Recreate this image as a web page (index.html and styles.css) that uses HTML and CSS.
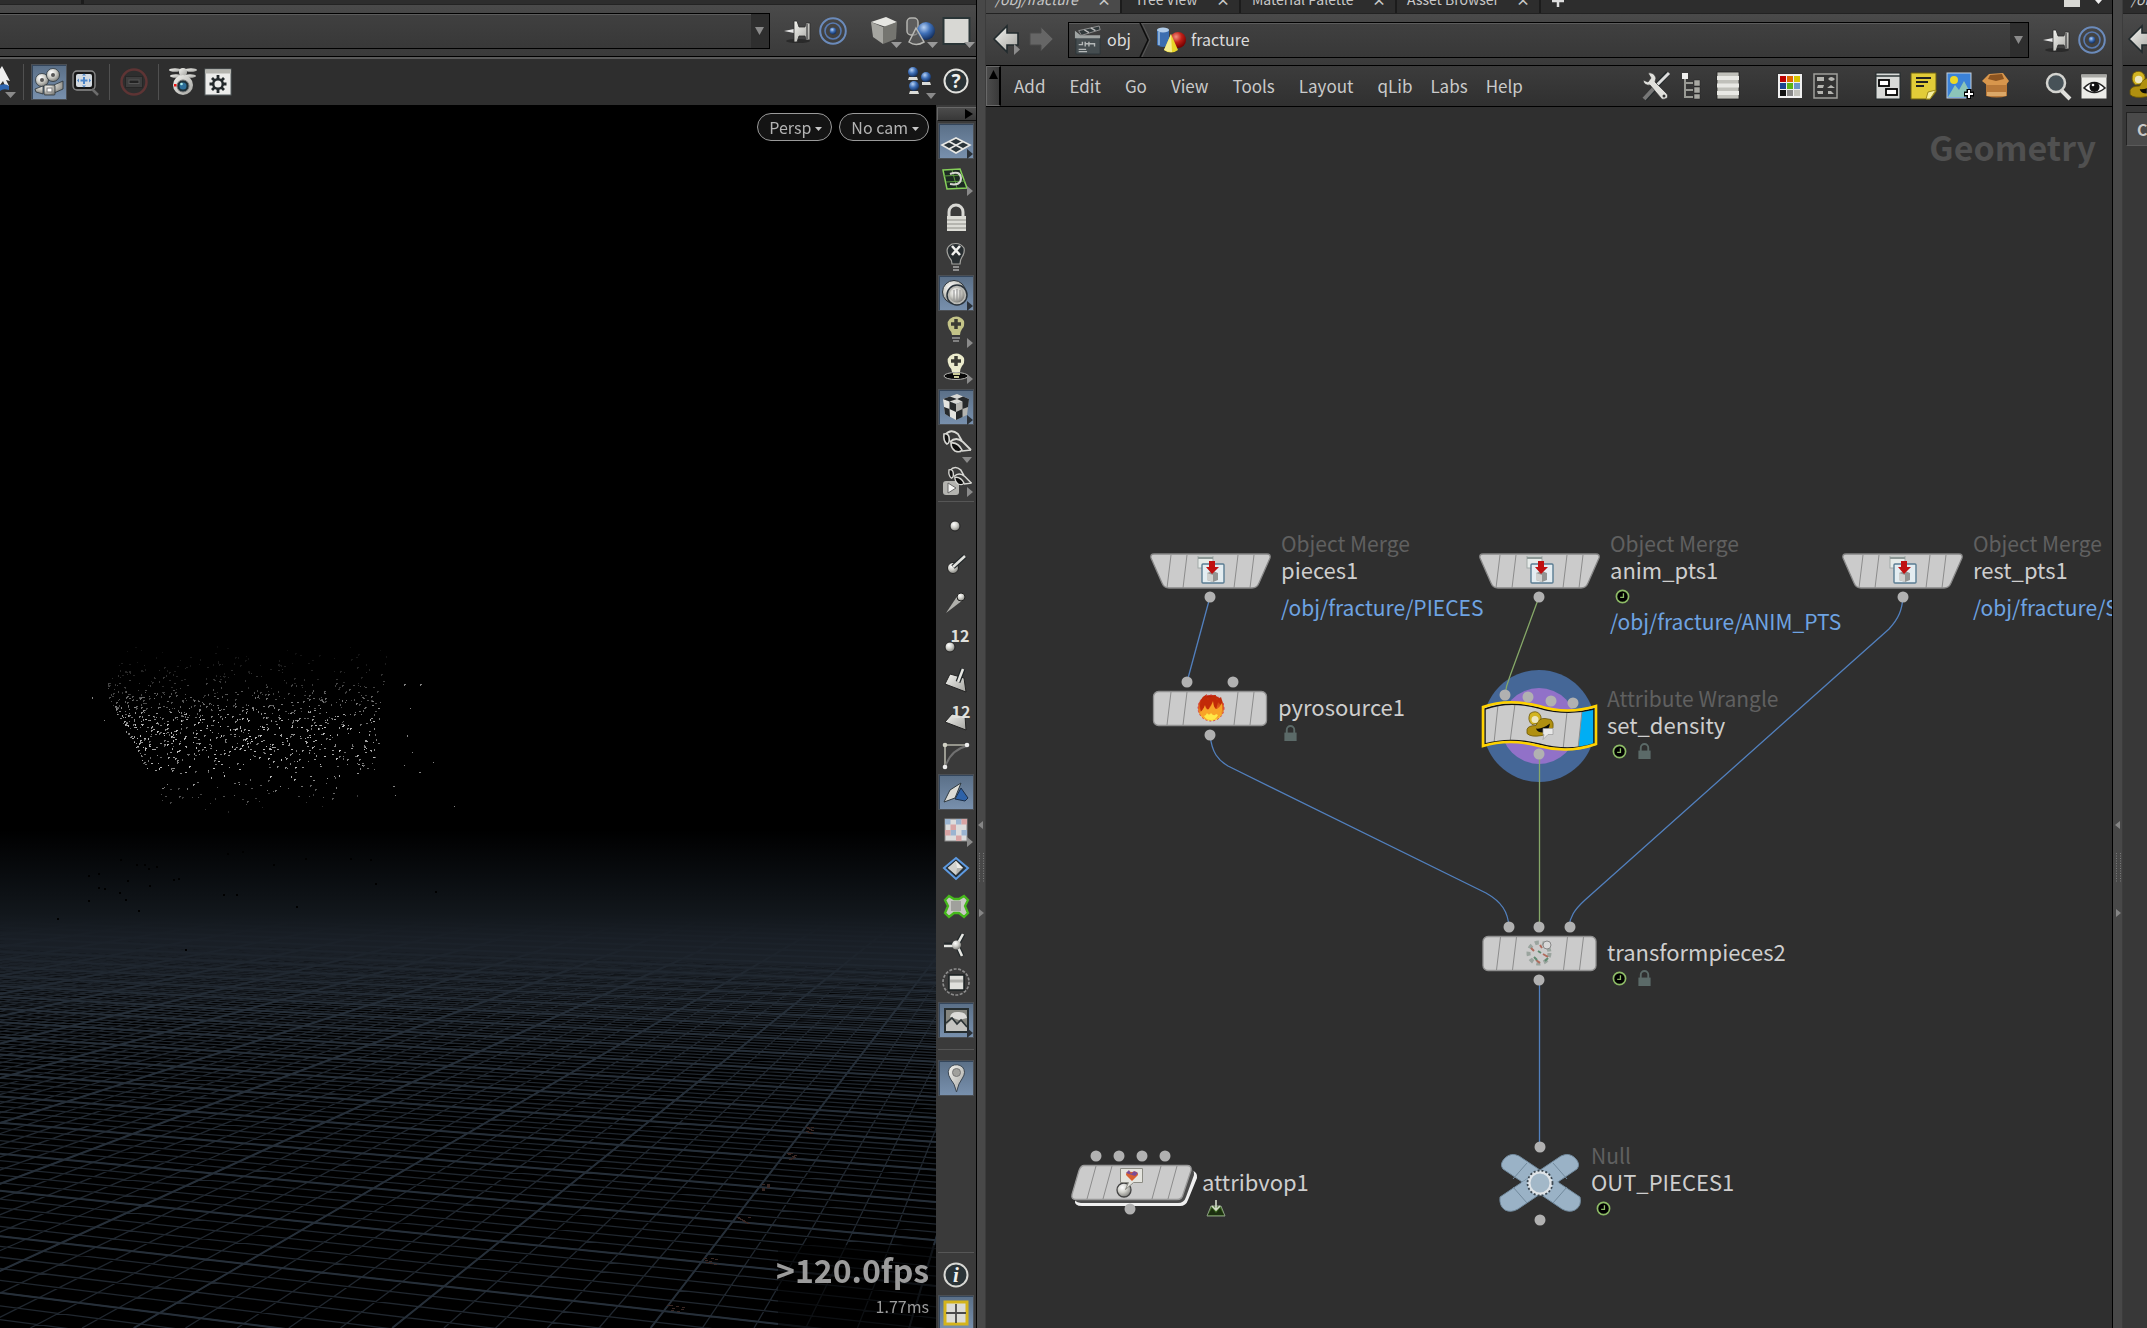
FILE: index.html
```html
<!DOCTYPE html>
<html lang="en">
<head>
<meta charset="utf-8">
<title>Network editor</title>
<link rel="stylesheet" href="styles.css">
</head>
<body>
<svg class="defs" aria-hidden="true">
  <defs>
    <linearGradient id="metal" x1="0" y1="0" x2="1" y2="1"><stop offset="0" stop-color="#f4f4f0"/><stop offset="1" stop-color="#a4a4a0"/></linearGradient>
    <radialGradient id="ball" cx=".38" cy=".32" r=".7"><stop offset="0" stop-color="#fff"/><stop offset=".5" stop-color="#d0d0ca"/><stop offset="1" stop-color="#80807c"/></radialGradient>
    <radialGradient id="blueball" cx=".38" cy=".3" r=".7"><stop offset="0" stop-color="#b8d2f4"/><stop offset=".5" stop-color="#3f70b8"/><stop offset="1" stop-color="#143060"/></radialGradient>
    <radialGradient id="redball" cx=".38" cy=".3" r=".7"><stop offset="0" stop-color="#f09080"/><stop offset=".5" stop-color="#c02018"/><stop offset="1" stop-color="#700"/></radialGradient>
    <linearGradient id="fire" x1="0" y1="0" x2="0" y2="1"><stop offset="0" stop-color="#b81c04"/><stop offset=".5" stop-color="#e0601a"/><stop offset="1" stop-color="#ffe83a"/></linearGradient>
  </defs>
  <symbol id="pin" viewBox="0 0 28 28"><ellipse cx="15" cy="24" rx="12" ry="2" fill="#2a2a2a"/><path d="M1 14 11 12v4z" fill="#e8e8e8"/><path d="M11 4h3l2 6h6l1-4h4v17h-4l-1-4h-6l-2 6h-3z" fill="url(#metal)" stroke="#2c2c2c" stroke-width=".8"/><path d="M24 7v15" stroke="#555" stroke-width="1.5"/></symbol>
  <symbol id="target" viewBox="0 0 28 28"><circle cx="14" cy="14" r="12.8" fill="none" stroke="#6b8bbb" stroke-width="2"/><circle cx="14" cy="14" r="8" fill="none" stroke="#587ab0" stroke-width="1.6"/><circle cx="14" cy="14" r="3.4" fill="url(#blueball)"/></symbol>
  <symbol id="back" viewBox="0 0 30 36"><path d="M3 17 16 4v7h11v12H16v7z" fill="url(#metal)" stroke="#222b2e" stroke-width="1.6"/><path d="M23 22v11l6-5.500z" fill="#8c8c8c"/></symbol>
  <symbol id="clock" viewBox="0 0 16 16"><circle cx="8" cy="8" r="6.500" fill="#000" stroke="#8dbb66" stroke-width="1.800"/><path d="M9 4.500V9H5.500" fill="none" stroke="#8dbb66" stroke-width="1.400"/></symbol>
  <symbol id="lock" viewBox="0 0 16 18"><path d="M4 9V5a4 4 0 0 1 8 0v4" fill="none" stroke="#5b6a68" stroke-width="2"/><rect x="1.500" y="8" width="13" height="9" fill="#5b6a68"/></symbol>
  <symbol id="hat" viewBox="0 0 28 28"><path d="M4 2q6-4 10 1 3 5-2 9l-6 1q-5-4-2-11z" fill="#d2b422" stroke="#6c5606" stroke-width=".8"/><path d="M1 18q1-4 9-4 3-8 9-7l6 1q3 3 2 8-2 6-11 8-11 2-15-2z" fill="#b09010" stroke="#6c5606" stroke-width=".8"/><path d="M10 17q6 1 14-5-1 7-7 9-6 0-7-4z" fill="#0c0c08"/><circle cx="9" cy="8" r="3.500" fill="#ece6c0"/><path d="M17 17h10v6h-5l-5 5 1-5h-1z" fill="#e8e8e8" stroke="#999" stroke-width=".7"/></symbol>
  <symbol id="merge" viewBox="0 0 28 28"><rect x="1" y="0" width="15" height="12" fill="#e6ebe9" stroke="#a2aaa8"/><path d="M1 2h15" stroke="#8d9896" stroke-width="2"/><rect x="5" y="8" width="22" height="19" rx="1" fill="#e4edf1" stroke="#5a7c92" stroke-width="1.400"/><path d="m10 17 6-2 5 2v7l-5 2-6-2z" fill="#939593"/><path d="m10 17 6 2v7l-6-2z" fill="#cfd0ce"/><path d="M12 5h6v6h4l-7 7-6-7h3z" fill="#c01010"/></symbol>
  <symbol id="eyeglass" viewBox="0 0 36 36"><path d="M7 8q6-7 13-1l4 7M12 15q6-6 13 0l8 8" fill="none" stroke="#d8d8d4" stroke-width="1.800"/><path d="M6 7q4-1 5 3 1 6-2 7-4-3-3-10z" fill="#141414" stroke="#d8d8d4" stroke-width="1.600"/><path d="M13 16q7-1 11 7-2 3-7 1-4-3-4-8z" fill="#0c0c0c" stroke="#d8d8d4" stroke-width="1.600"/><path d="m24 24 9-1" stroke="#d8d8d4" stroke-width="1.600"/></symbol>
</svg>

<div class="app">
  <section class="pane scene">
    <div class="stub"><i></i></div>
    <div class="bar pathbar">
      <div class="combo"><input class="path" type="text" aria-label="Path"><button class="drop" aria-label="Recent paths"><svg width="12" height="12"><path d="M1 2h9L5.500 10z" fill="#8a8a8a"/></svg></button></div>
      <button class="ic" aria-label="Pin"><svg><use href="#pin"/></svg></button>
      <button class="ic" aria-label="Link"><svg><use href="#target"/></svg></button>
      <button class="ic wide" aria-label="Shading"><svg viewBox="0 0 28 28"><path d="m1 5 15-5 11 5-11 5z" fill="#e6e6e2"/><path d="m1 5 12 5v17L3 20z" fill="#a5a5a0"/><path d="m13 10 14-5-1 17-13 5z" fill="#757570"/><path d="M21 25h11l-5.500 6z" fill="#999"/></svg></button>
      <button class="ic" aria-label="Objects"><svg viewBox="0 0 28 28"><rect x="1" y="1" width="11" height="17" rx="4" fill="#5e5e5e" stroke="#b4b4b0" stroke-width="1.500"/><circle cx="20" cy="14" r="9" fill="url(#blueball)"/><path d="m10 11 8 14q-8 5-15 0z" fill="#6668" stroke="#b8b8b4" stroke-width="1.500"/><path d="M21 25h11l-5.500 6z" fill="#999"/></svg></button>
      <button class="ic" aria-label="Background"><svg viewBox="0 0 28 28"><rect x="1.500" y="1" width="26" height="26" fill="#d8d8d4" stroke="#2a3537" stroke-width="2"/><path d="M22 25h11l-5.500 6z" fill="#999"/></svg></button>
    </div>
    <div class="bar tools">
      <button class="tool sel" aria-label="Select"><svg width="24" height="36"><circle cx="1" cy="13" r="4" fill="#24435a"/><path d="M2 2 10 17l-4-1 3 6-3 2-3-7-3 4V5z" fill="#eee"/><path d="M0 21q6-2 9 1v4q-6-2-9 1z" fill="#2f66b0"/><path d="M5 28h11l-5.500 6z" fill="#8a8a8a"/></svg></button>
      <i class="vsep"></i>
      <button class="tool on" aria-label="Camera view"><svg width="34" height="36" viewBox="0 0 34 36"><g fill="url(#ball)" stroke="#2b3338" stroke-width=".8"><circle cx="10" cy="16" r="6.500"/><circle cx="21" cy="11" r="6.500"/><path d="m22 21 9-4v8l-9 4zM3 25l8-3v8l-7-2z"/><rect x="12" y="21" width="11" height="10" rx="1"/></g><circle cx="10" cy="16" r="2" fill="#555"/><circle cx="21" cy="11" r="2" fill="#555"/><rect x="15" y="24" width="5" height="4" fill="#fff" stroke="#777"/></svg></button>
      <button class="tool" aria-label="View tool"><svg width="34" height="36" viewBox="0 0 34 36"><rect x="8" y="9" width="18" height="15" rx="3" fill="#d4dae0" stroke="#151515" stroke-width="2"/><rect x="6" y="7" width="22" height="19" rx="4" fill="none" stroke="#8c8c8c" stroke-width="1.300"/><path d="m25 25 6 6" stroke="#6c6c6c" stroke-width="2.500"/><path d="M17 13v7M13.500 16.500h7" stroke="#4a84c8" stroke-width="2"/><path d="m10 16.500 2-2v4zM24 16.500l-2-2v4zM15 11.500h4l-2-2zM15 21.500h4l-2 2z" fill="#4a84c8"/></svg></button>
      <i class="vsep s2"></i>
      <button class="tool stop" aria-label="Stop"><svg width="30" height="30" viewBox="0 0 30 30"><circle cx="15" cy="15" r="12.500" fill="none" stroke="#5e3434" stroke-width="2.500"/><rect x="6.500" y="9.500" width="17" height="11" fill="#3d3d3d" stroke="#262626"/><rect x="10" y="13" width="10" height="3.500" fill="#222" stroke="#555"/></svg></button>
      <i class="vsep s3"></i>
      <button class="tool drone" aria-label="Flycam"><svg width="30" height="30" viewBox="0 0 30 30"><g fill="url(#metal)"><ellipse cx="7" cy="3" rx="6" ry="1.800"/><ellipse cx="23" cy="3" rx="6" ry="1.800"/><ellipse cx="8" cy="9" rx="6" ry="1.800"/><ellipse cx="22" cy="9" rx="6" ry="1.800"/><circle cx="15" cy="5" r="4"/><circle cx="15" cy="18" r="10"/></g><circle cx="15" cy="19" r="6" fill="#1e3038" stroke="#777"/><circle cx="15" cy="19" r="3.500" fill="#2d6f9a"/><circle cx="13.500" cy="17" r="1.300" fill="#aee"/><rect x="6" y="17" width="2.500" height="2.500" fill="#e11"/></svg></button>
      <button class="tool" aria-label="Flipbook"><svg width="28" height="28" viewBox="0 0 28 28"><rect x="1" y="1" width="26" height="26" fill="#ececea" stroke="#555c5e"/><path d="M1 3.500h26" stroke="#b4b4ae" stroke-width="4"/><g stroke="#23292b" stroke-width="2.800"><path d="M14 7v18M5.500 16h17M8 10l12 12M20 10 8 22"/></g><circle cx="14" cy="16" r="4.800" fill="#ececea" stroke="#23292b" stroke-width="2.500"/></svg></button>
      <span class="grow"></span>
      <button class="tool bub" aria-label="Handles"><svg width="30" height="34" viewBox="0 0 30 34"><g fill="url(#blueball)"><circle cx="9" cy="7" r="5"/><circle cx="22" cy="12" r="5"/><circle cx="10" cy="21" r="5"/></g><path d="M5 12h8l1 3H4zM18 17h8l1 3h-9zM6 26h8l1 3H5z" fill="#dcdcd8"/><path d="M22 28h10l-5 6z" fill="#8a8a8a"/></svg></button>
      <button class="tool" aria-label="Help"><svg width="28" height="28" viewBox="0 0 28 28"><circle cx="14" cy="13" r="11.500" fill="#2a3337" stroke="#e2e2de" stroke-width="2"/><text x="14" y="19.500" class="qm">?</text></svg></button>
    </div>
    <div class="work">
      <div class="viewport">
        <canvas id="view" class="view"></canvas>
        <div class="pills"><button class="pill">Persp<svg width="7" height="4"><path d="M0 0h7L3.500 4z" fill="#c8c8c8"/></svg></button><button class="pill">No cam<svg width="7" height="4"><path d="M0 0h7L3.500 4z" fill="#c8c8c8"/></svg></button></div>
        <div class="stats"><strong>&gt;120.0fps</strong><span>1.77ms</span></div>
      </div>
      <div class="strip">
        <button class="head" aria-label="Collapse"><svg width="10" height="10"><path d="M1 0v10l8-5z" fill="#000"/></svg></button>
        <button class="b on" aria-label="Grid"><svg viewBox="0 0 36 36"><path d="m4 22 14-7 14 7-14 8z" fill="#2a3439" stroke="#e8e8e4" stroke-width="1.600"/><path d="m11 18.500 14 7.500M25 18.500 11 26" stroke="#e8e8e4" stroke-width="1.600"/><path class="tri" d="M29 26v10l6-5z"/></svg></button>
        <button class="b" aria-label="Guides"><svg viewBox="0 0 36 36"><path d="m5 9 17-1 7 19-20 1z" fill="#1c2a22" stroke="#86d05a" stroke-width="1.500"/><path d="m6 15 18-1M14 9l5 18M8 21l19-1" stroke="#5b9a40"/><path d="M12 13q10-4 11 4 0 8-11 6" fill="none" stroke="#d6d6d2" stroke-width="2"/><path class="tri" d="M29 25v10l6-5z"/></svg></button>
        <button class="b" aria-label="Lock"><svg viewBox="0 0 36 36"><path d="M11 18v-5a7 7 0 0 1 14 0v5" fill="none" stroke="#d8d8d4" stroke-width="3"/><rect x="9" y="17" width="19" height="15" fill="#dcdcd6"/><path d="M9 21h19M9 25h19M9 29h19" stroke="#a8a8a2" stroke-width="1.500"/></svg></button>
        <button class="b" aria-label="No light"><svg viewBox="0 0 36 36"><path d="M14 27q0-4-3-7-5-9 3-13 8-2 12 4 1 5-2 9-2 3-2 7z" fill="#272d30" stroke="#a4a4a0" stroke-width="1.200"/><path d="m14 9 8 9m0-9-8 9" stroke="#f0f0ee" stroke-width="2.600"/><path d="M15 30h6M15 33h6" stroke="#aaa" stroke-width="1.500"/></svg></button>
        <button class="b on" aria-label="Headlight"><svg viewBox="0 0 36 36"><circle cx="16" cy="17" r="11.500" fill="url(#ball)" stroke="#29323a"/><circle cx="19" cy="20" r="10" fill="#b9b9b4" stroke="#29323a" stroke-width="1.500"/><circle cx="19" cy="20" r="7.500" fill="url(#ball)"/><path d="M16 15v10M19 14v12M22 15v10" stroke="#999" stroke-width="1.200"/><path class="tri" d="M29 26v10l6-5z"/></svg></button>
        <button class="b" aria-label="Light"><svg viewBox="0 0 36 36"><path d="M14 22q0-3-3-6-4-9 4-12 7-2 11 4 1 5-2 8-2 3-2 6z" fill="#c4c488"/><path d="M18 6v10M13 11h10" stroke="#3c3c34" stroke-width="3.500"/><path d="M14 25h8M15 28h6" stroke="#999" stroke-width="1.500"/><path class="tri" d="M29 25v10l6-5z"/></svg></button>
        <button class="b" aria-label="Light with shadow"><svg viewBox="0 0 36 36"><ellipse cx="18" cy="25" rx="12" ry="3.500" fill="#0a0a0a" stroke="#b4b4b0"/><path d="M14 21q0-3-3-6-4-9 4-12 7-2 11 4 1 5-2 8-2 3-2 6z" fill="#ebebcc"/><path d="M18 5v10M13 10h10" stroke="#3c3c34" stroke-width="3.500"/><path d="M15 23h7M16 26h5" stroke="#cc9" stroke-width="2"/><path class="tri" d="M29 23v10l6-5z"/></svg></button>
        <button class="b on" aria-label="Materials"><svg viewBox="0 0 36 36"><path d="m5 10 14-5 12 5-13 5z" fill="#d8d8d4"/><path d="m5 10 13 5v16L7 25z" fill="#e4e4e0"/><path d="m31 10-13 5v16l11-5z" fill="#b4b4b0"/><path d="m12 7.500 7 2.500-7.500 2.500L5 10zM19 10l6-2.500 6 2.500-6.500 2.500zM11.500 12.500 18 15v8l-6.500-3zM6 18l5.500 2 .5 8-5-3zM24.500 12.500 31 10l-1 8-5.500 2zM18 23l6.500-3v8L18 31z" fill="#26292b"/><path class="tri" d="M29 26v10l6-5z"/></svg></button>
        <button class="b" aria-label="View filter"><svg viewBox="0 0 36 36"><use href="#eyeglass" width="36" height="36"/><path class="tri" d="M24 30h10l-5 6z"/></svg></button>
        <button class="b" aria-label="Playback filter"><svg viewBox="0 0 36 36"><rect x="5" y="16" width="16" height="14" rx="3" fill="#b4b4b0"/><path d="m10 18 8 5-8 5z" fill="#f6f6f4" stroke="#666"/><use href="#eyeglass" x="6" y="-1" width="30" height="30"/><path class="tri" d="M29 22v10l6-5z"/></svg></button>
        <i class="rule tight"></i>
        <button class="b" aria-label="Points"><svg viewBox="0 0 36 36"><circle cx="17" cy="18" r="5" fill="url(#ball)" stroke="#222"/></svg></button>
        <button class="b" aria-label="Point normals"><svg viewBox="0 0 36 36"><circle cx="15" cy="22" r="5.500" fill="url(#ball)" stroke="#222"/><path d="M15 21 27 10" stroke="#202628" stroke-width="5"/><path d="M15 21 27 10" stroke="#e2e2de" stroke-width="2.500"/></svg></button>
        <button class="b" aria-label="Point trails"><svg viewBox="0 0 36 36"><path d="M8 29 20 11l5 5z" fill="#b0b0ac"/><circle cx="23" cy="13" r="4" fill="url(#ball)" stroke="#222"/></svg></button>
        <button class="b" aria-label="Point numbers"><svg viewBox="0 0 36 36"><circle cx="12" cy="25" r="5" fill="url(#ball)" stroke="#222"/><text x="22" y="20" class="num">12</text></svg></button>
        <button class="b" aria-label="Primitive normals"><svg viewBox="0 0 36 36"><path d="m12 14 14 4 2 14L7 24z" fill="url(#metal)" stroke="#222"/><path d="m20 22 5-13" stroke="#202628" stroke-width="5"/><path d="m20 22 5-13" stroke="#e6e6e2" stroke-width="2.500"/></svg></button>
        <button class="b" aria-label="Primitive numbers"><svg viewBox="0 0 36 36"><path d="m14 16 13 2 1 14L7 24z" fill="url(#metal)" stroke="#222"/><text x="23" y="20" class="num">12</text></svg></button>
        <button class="b" aria-label="Curve"><svg viewBox="0 0 36 36"><path d="M7 9v23M7 9h23" stroke="#b4b4a8" stroke-width="1.600"/><path d="M7 32Q12 14 29 10" fill="none" stroke="#707070" stroke-width="1.800"/><circle cx="7" cy="9" r="2.300" fill="#d0d0c4"/><circle cx="29" cy="9" r="2.300" fill="#eee"/><circle cx="7" cy="31" r="2.300" fill="#eee"/></svg></button>
        <button class="b on" aria-label="Primitives"><svg viewBox="0 0 36 36"><path d="m17 25 6-11 7 10-3 3z" fill="#2d62a8" stroke="#1c2f48"/><path d="m6 28 6-12 11-7-6 15z" fill="#dcdcd6" stroke="#303a40"/></svg></button>
        <button class="b" aria-label="UV texture"><svg viewBox="0 0 36 36"><rect x="7" y="7" width="22" height="22" fill="#dcdcdc" stroke="#8a8a8a"/><path d="M7 7h5.500v5.500H7zM18 7h5.500v5.500H18zM12.500 18H18v5.500h-5.500zM23.500 18H29v5.500h-5.500z" fill="#9bb4d0"/><path d="M12.500 12.500H18V18h-5.500zM23.500 12.500H29V7h-5.500zM7 18h5.500v5.500H7zM18 23.500h5.500V29H18z" fill="#d8a4a4"/><path class="tri" d="M29 25v10l6-5z"/></svg></button>
        <button class="b" aria-label="Packed"><svg viewBox="0 0 36 36"><path d="M18 8 30 18 18 29 6 18z" fill="#28323a" stroke="#5d9ae2" stroke-width="2"/><path d="m18 11 7 7-7 7-8-7z" fill="#b4b4b0"/><path d="m18 11 7 7H10z" fill="#ecece8"/><path d="m18 11 1 7-1 7-8-7z" fill="#d0d0cc"/></svg></button>
        <button class="b" aria-label="Hull"><svg viewBox="0 0 36 36"><path d="m7 12 4-4 5 3h5l5-3 4 4-3 6 3 7-4 4-5-4h-5l-5 4-4-4 3-7z" fill="#c8c8c4" stroke="#46b81c" stroke-width="2.300"/><path d="M13 13h10v10H13z" fill="#a0a09c"/></svg></button>
        <button class="b" aria-label="Origin gnomon"><svg viewBox="0 0 36 36"><path d="M18 19H6M19 19l6-11M19 19l5 11" stroke="#23292b" stroke-width="5"/><path d="M18 20H6M19 19l6-11M19 19l5 11" stroke="#e6e6e2" stroke-width="2.600"/><circle cx="18.500" cy="19" r="4.500" fill="url(#ball)"/></svg></button>
        <button class="b" aria-label="Region"><svg viewBox="0 0 36 36"><circle cx="18" cy="18" r="13" fill="none" stroke="#8c8c8c" stroke-width="1.700" stroke-dasharray="3 1.500"/><rect x="11" y="11" width="15" height="15" fill="#e0e0dc" stroke="#1a2022" stroke-width="1.500"/><path d="M12 17h13" stroke="#b0b0ac" stroke-width="3"/></svg></button>
        <button class="b on" aria-label="Background image"><svg viewBox="0 0 36 36"><rect x="7" y="7" width="23" height="23" fill="#85867f" stroke="#262e30" stroke-width="2"/><path d="M12 15q1-5 7-5 9-1 10 6l-8 2z" fill="#dcdcd8"/><path d="m8 23 6-6 5 5 4-3 6 6v4H8z" fill="#c4c4c0"/><path d="m8 21 6-5 5 6 4-4 6 7" fill="none" stroke="#2b3335" stroke-width="1.600"/><path class="tri" d="M29 26v10l6-5z"/></svg></button>
        <i class="rule loose"></i>
        <button class="b on" aria-label="Marker"><svg viewBox="0 0 36 36"><path d="M18.500 32q-2-9-6-13-5-8 1-13 6-3 11 1 4 5 0 11-4 5-6 14z" fill="url(#metal)" stroke="#3b4652"/><circle cx="18.500" cy="12.500" r="4" fill="#a0a09c" stroke="#777"/></svg></button>
        <span class="grow"></span>
        <i class="rule foot"></i>
        <button class="b" aria-label="Info"><svg viewBox="0 0 36 36"><circle cx="18" cy="18" r="11.500" fill="#2a3337" stroke="#d8d8d4" stroke-width="2"/><text x="18" y="25" class="inf">i</text></svg></button>
        <button class="b on" aria-label="Layout"><svg viewBox="0 0 36 36"><rect x="7" y="7" width="22" height="22" fill="#dcdcd6" stroke="#d4b41c" stroke-width="3"/><path d="M18 9v19M8 18h20" stroke="#4a4a4a" stroke-width="1.800"/></svg></button>
      </div>
    </div>
  </section>

  <div class="divider"><span class="up"></span><svg width="8" height="96" viewBox="0 0 8 96"><path d="M6 0v8L1 4zM2 88v8l5-4z" fill="#858585"/><path d="M2.500 32v30M6.500 32v30" stroke="#7a7a7a" stroke-dasharray="1 1.500"/></svg><span class="down"></span></div>

  <section class="pane network">
    <nav class="tabs">
      <a href="#" class="tab t1 cur">/obj/fracture<b>×</b></a><a href="#" class="tab t2">Tree View<b>×</b></a><a href="#" class="tab t3">Material Palette<b>×</b></a><a href="#" class="tab t4">Asset Browser<b>×</b></a>
      <button class="plus" aria-label="New tab"><svg width="14" height="10"><path d="M7 0v7M1 1h12" stroke="#ddd" stroke-width="2.500"/></svg></button>
      <span class="grow"></span>
      <button class="max" aria-label="Maximize"><svg width="48" height="8"><path d="M0 0h16v7H0z" fill="#d8d8d4"/><path d="M31 0h7l-3.500 4z" fill="#eee"/></svg></button>
    </nav>
    <div class="bar pathbar">
      <button class="nav" aria-label="Back"><svg><use href="#back"/></svg></button>
      <button class="nav" aria-label="Forward"><svg viewBox="0 0 30 36"><path d="M27 17 15 5v6H4v12h11v6z" fill="#666" stroke="#4a4a4a"/></svg></button>
      <div class="combo crumbs">
        <a href="#"><svg width="28" height="30" viewBox="0 0 30 32"><path d="M2 13h26v18H2z" fill="#454d50" stroke="#2c3538"/><path d="M1 12V6l6 5h21v3H1z" fill="#9ea3a2"/><path d="m5 6 22-5 1 4L8 11z" fill="#30383a" stroke="#aaa" stroke-width=".8"/><path d="m11 5 5 3m2-5 5 3" stroke="#bbb" stroke-width="1.500"/><path d="M5 21h4v-3M12 18v5m4-5v5m-4-3h10v3M5 26h8M5 28.500h9" stroke="#b4b8b8" stroke-width="1.500" fill="none"/></svg><span>obj</span></a>
        <svg class="chev" width="12" height="34" viewBox="0 0 12 34"><path d="M1 0 9 17 1 34" fill="none" stroke="#0c0c0c" stroke-width="1.500"/><path d="M3 0l8 17L3 34" fill="none" stroke="#585858"/></svg>
        <a href="#"><svg width="30" height="28" viewBox="0 0 30 28"><path d="M1 4q5-4 12 0v15q-6 4-12 0z" fill="#3c6eb0"/><ellipse cx="7" cy="4" rx="6" ry="2.500" fill="#b0cbe8"/><path d="M3 6v13" stroke="#87add8" stroke-width="2"/><circle cx="22" cy="14" r="8" fill="url(#redball)"/><path d="m15 8 7 16q-7 5-14 0z" fill="#e8d428"/><path d="m15 8 1 18q-5 0-8-2z" fill="#f6ee90"/></svg><span>fracture</span></a>
        <span class="grow"></span>
        <button class="drop" aria-label="Recent paths"><svg width="12" height="12"><path d="M1 2h9L5.500 10z" fill="#8a8a8a"/></svg></button>
      </div>
      <button class="ic" aria-label="Pin"><svg><use href="#pin"/></svg></button>
      <button class="ic" aria-label="Link"><svg><use href="#target"/></svg></button>
    </div>
    <div class="bar menubar">
      <button class="fold" aria-label="Collapse"><svg width="9" height="9"><path d="M4.500 0 9 9H0z" fill="#000"/></svg></button>
      <button class="m">Add</button><button class="m">Edit</button><button class="m">Go</button><button class="m">View</button><button class="m">Tools</button><button class="m">Layout</button><button class="m">qLib</button><button class="m n2">Labs</button><button class="m n2">Help</button>
      <span class="grow"></span>
      <div class="icons">
        <button class="ic" aria-label="Preferences"><svg viewBox="0 0 28 28"><path d="M3 27 26 1" stroke="#22282a" stroke-width="5"/><path d="M2 27 13 15" stroke="#777" stroke-width="4"/><path d="M12 16 27 1" stroke="#ddd" stroke-width="3"/><path d="M6 1q6-1 8 5l-1 4 12 12q2 4-2 5t-4-1L8 13q-6 1-7-5l5 2 3-4z" fill="#e0e0dc" stroke="#333" stroke-width=".7"/><circle cx="22" cy="24" r="1.500" fill="#333"/></svg></button>
        <button class="ic" aria-label="Tree"><svg viewBox="0 0 28 28"><path d="M7 6v19h8M7 11h8M7 18h8" stroke="#999a94" stroke-width="2" fill="none"/><rect x="4" y="1" width="6" height="6" fill="#f0f0ee"/><path d="M16 8h6v6h-6zM16 15h6v6h-6zM16 22h6v5h-6z" fill="#a8a8a2" stroke="#222" stroke-width=".5"/></svg></button>
        <button class="ic" aria-label="List"><svg viewBox="0 0 28 28"><rect x="3" y="0" width="22" height="27" fill="#c0c0ba" stroke="#222" stroke-width=".8"/><path d="M3 6h22M3 13.500h22M3 21h22" stroke="#e8e8e4" stroke-width="4"/></svg></button>
        <button class="ic g" aria-label="Color palette"><svg viewBox="0 0 28 28"><rect x="1.500" y="1.500" width="25" height="25" fill="#f0f0f0" stroke="#333"/><path d="M4 4h6v6H4z" fill="#b00"/><path d="M11 4h6v6h-6z" fill="#e06800"/><path d="M18 4h6v6h-6z" fill="#d8c400"/><path d="M4 11h6v6H4z" fill="#1c4490"/><path d="M11 11h6v6h-6z" fill="#5ab414"/><path d="M18 11h6v6h-6z" fill="#6c96c8"/><path d="M4 18h6v6H4z" fill="#111"/><path d="M11 18h6v6h-6z" fill="#888"/><path d="M18 18h6v6h-6z" fill="#c4c4bc"/></svg></button>
        <button class="ic" aria-label="Shape palette"><svg viewBox="0 0 28 28"><rect x="2" y="2" width="23" height="24" fill="#333" stroke="#a0a09c" stroke-width="1.500"/><path d="M5 5h7v4H5zM16 7q3-4 7 0-3 4-7 0zM6 13h6l-1 3H5zM15 16l4-3 4 3zM5 19h6v3H6zM16 19h3l3 3h-6z" fill="#b4b4b0"/></svg></button>
        <button class="ic g" aria-label="Network box"><svg viewBox="0 0 28 28"><rect x="2" y="1" width="24" height="26" fill="#d8dad8" stroke="#222a2c"/><path d="M2 4h24" stroke="#2c3436" stroke-width="1.500"/><rect x="5" y="8" width="10" height="6" fill="#fff" stroke="#000" stroke-width="1.800"/><rect x="12" y="17" width="11" height="6" fill="#fff" stroke="#000" stroke-width="1.800"/></svg></button>
        <button class="ic" aria-label="Sticky note"><svg viewBox="0 0 28 28"><path d="M1 1h25v19l-6 7H1z" fill="#e2cc38" stroke="#6c6010"/><path d="m26 18-8 2-2 7h4z" fill="#f6efa0" stroke="#a08c18"/><path d="M6 6h15M6 10h12M6 14h8" stroke="#222" stroke-width="1.800"/></svg></button>
        <button class="ic" aria-label="Image"><svg viewBox="0 0 28 28"><rect x="1" y="1" width="24" height="25" fill="#3b82d8" stroke="#c4d0dc"/><circle cx="8" cy="8" r="4" fill="#ecd828"/><path d="m2 25 7-12 4 5 5-9 6 11v5z" fill="#8cc4b8"/><path d="M23 17v10M18 22h10" stroke="#000" stroke-width="5"/><path d="M23 18v8M19 22h8" stroke="#fff" stroke-width="2"/></svg></button>
        <button class="ic" aria-label="Box"><svg viewBox="0 0 28 28"><path d="M4 12h21v12q-10 3-21 0z" fill="#b87838"/><path d="m7 2 14-1 6 8-3 4H5L0 9z" fill="#d8964c"/><path d="m8 3 12-1 2 5-8 2-8-2z" fill="#8c5420"/><path d="M5 20h19v4H5z" fill="#dca868"/></svg></button>
        <button class="ic g" aria-label="Find"><svg viewBox="0 0 28 28"><path d="m17 18 9 9" stroke="#e0e0dc" stroke-width="4"/><circle cx="12" cy="11" r="9" fill="#475258" stroke="#d4d4d0" stroke-width="2.500"/></svg></button>
        <button class="ic" aria-label="Display options"><svg viewBox="0 0 28 28"><rect x="1" y="2" width="26" height="25" fill="#ecece8" stroke="#333"/><path d="M1 4h26" stroke="#a8a8a4" stroke-width="3"/><path d="M4 16q10-11 21 0-11 9-21 0z" fill="#fff" stroke="#222" stroke-width="1.600"/><circle cx="14.500" cy="15" r="5" fill="#111"/><circle cx="13" cy="13" r="1.300" fill="#fff"/></svg></button>
      </div>
    </div>
    <div class="canvas">
      <div class="context">Geometry</div>
      <svg class="graph" width="1127" height="1221" viewBox="986 107 1127 1221">
        <circle cx="1539" cy="726" r="56" fill="#456797"/><circle cx="1539" cy="726" r="38" fill="#9171c8"/>
        <g fill="none" stroke="#5280be" stroke-width="1.300">
          <path d="M1210 597 1187 682"/><path d="M1210 735C1212 753 1218 760 1228 766L1486 893C1502 902 1508 912 1509 927"/>
          <path d="M1903 597C1902 610 1899 618 1889 629L1585 900C1574 910 1570 917 1569 927"/><path d="M1539.500 979V1146"/>
        </g>
        <g fill="none" stroke="#86a868" stroke-width="1.300"><path d="M1539 597 1510 676Q1506 686 1505 695"/><path d="M1539.500 754V927"/></g>
        <g id="mergenodes">
          <g id="trap"><path d="M1154 554h113q4 0 3 4l-11 25q-2 5-7 5h-83q-5 0-7-5l-11-25q-1-4 3-4z" fill="#cbcbcb" stroke="#888" stroke-width="1.300"/><path d="m1171 555-4 33M1187 555l-4 33M1238 555l-4 33M1254 555l-4 33" stroke="#8c8c8c" fill="none"/><use href="#merge" x="1197" y="556" width="28" height="28"/></g>
          <use href="#trap" x="329"/><use href="#trap" x="692"/>
        </g>
        <g id="flat"><rect x="1153.500" y="691.500" width="113" height="34" rx="5" fill="#cbcbcb" stroke="#909090" stroke-width="1.300"/><path d="m1171 692-4 33M1187 692l-4 33M1238 692l-4 33M1254 692l-4 33" stroke="#8c8c8c"/></g>
        <use href="#flat" x="329.500" y="245"/>
        <circle cx="1211" cy="708" r="13" fill="url(#fire)" stroke="#d8404c" stroke-dasharray="2 2"/><path d="M1201 700q2-4 6-6-2 5 1 6 4-5 8-5-2 4 1 5l4-3q2 4 1 9l-4-4-2 8-4-7-4 7-3-4-4 6q-2-6 0-12z" fill="#c22a08"/><path d="M1200 712q3-1 5-7 1 6 4 4 3-4 4-8 1 9 4 8 3-2 5-6 2 16-11 17-9 0-11-8z" fill="#f8a428"/><path d="M1204 716q2 0 3-3 2 3 4 0 3 4 5 1l2 1q-2 5-7 5-5 0-7-4z" fill="#ffe848"/>
        <path d="M1483 707q24-9 56-1 28 9 57 0v39q-28 10-57 1-30-8-56 0z" fill="#cbcbcb"/>
        <path d="M1582 712q8-1 14-5v38q-8 3-18 4z" fill="#00aef4"/>
        <path d="m1498 705-4 38M1515 704l-5 38M1567 712l-4 38M1582 711l-4 38" stroke="#8c8c8c"/>
        <path d="M1485 709q24-9 54-1 28 8 55 1v35q-26 8-55 0-28-7-54 0z" fill="none" stroke="#111" stroke-width="1.500"/>
        <path d="M1483 707q24-9 56-1 28 9 57 0v38q-28 10-57 2-30-8-56 0z" fill="none" stroke="#ffd200" stroke-width="2.600"/>
        <use href="#hat" x="1526" y="711" width="28" height="29"/>
        <g stroke-width="2"><circle cx="1539" cy="953" r="10.500" fill="none" stroke="#9aa49e" stroke-width="4" stroke-dasharray="4 3.500"/><circle cx="1547" cy="945" r="4" fill="#d8d8d8" stroke="#888" stroke-width="1"/><path d="m1531 948 3 3m6-6 2 3m-6 12 4 3m3-9 5 3" stroke="#b06b5c"/><path d="m1534 957 3 3m1-9 3 2m4 8 3-3" stroke="#5f8a70"/></g>
        <path d="M1088 1170h103q7 2 6 8l-9 22q-2 6-8 6h-98q-8 0-7-6z" fill="#f0f0f0"/><path d="M1086 1167h102q7 2 6 8l-8 22q-2 6-8 6h-97q-8-1-7-7z" fill="#4c4c4c"/><path d="M1084 1165.500h103q5 0 4 5l-8 24q-1 5-6 5h-101q-5 0-4-5l7-24q2-5 5-5z" fill="#cbcbcb" stroke="#999" stroke-width="1.300"/><path d="m1096 1166-9 33M1112 1166l-9 33M1161 1166l-9 33M1177 1166l-9 33" stroke="#8c8c8c"/>
        <circle cx="1124" cy="1190" r="7" fill="url(#ball)" stroke="#444" stroke-width="1.300"/><path d="M1120.500 1168.500h22v14h-9l-8 7 3-7h-8z" fill="#e4e4de" stroke="#8c8c84"/><path d="m1132 1181-6-6q0-5 6-3 6-2 6 3z" fill="#d86030"/><path d="m1126 1173 3-3 2 4 3-3 4 2-3 3z" fill="#7c4c94"/>
        <g fill="#9ab2c6" stroke="#71899c"><path d="m1505 1158q6-6 14-2l61 41q2 9-5 13-6 3-13-1l-59-40q-4-5 2-11z"/><path d="M1575 1158q-6-6-14-2l-61 41q-1 9 5 13 6 3 13-1l59-40q4-5-2-11z"/><path d="m1513 1179 14-16M1567 1179l-14-16M1513 1187l14 16M1567 1187l-14 16" fill="none"/></g><path d="M1521 1183 1534 1174h12l13 9-13 9h-12z" fill="#9ab2c6"/>
        <circle cx="1540" cy="1183" r="11" fill="#a3b8c8" stroke="#dfe4e8" stroke-width="3"/><circle cx="1540" cy="1183" r="12.500" fill="none" stroke="#3c4852" stroke-width="1.800" stroke-dasharray="2 2"/>
        <g fill="#b1b1b1"><circle cx="1210" cy="597" r="5.500"/><circle cx="1539" cy="597" r="5.500"/><circle cx="1903" cy="597" r="5.500"/><circle cx="1187" cy="682" r="5.500"/><circle cx="1233" cy="682" r="5.500"/><circle cx="1210" cy="735" r="5.500"/><circle cx="1505" cy="695" r="5.500"/><circle cx="1528" cy="697" r="5.500"/><circle cx="1551" cy="701" r="5.500"/><circle cx="1573" cy="703" r="5.500"/><circle cx="1539" cy="754" r="5.500"/><circle cx="1509" cy="927" r="5.500"/><circle cx="1539" cy="927" r="5.500"/><circle cx="1570" cy="927" r="5.500"/><circle cx="1539" cy="980" r="5.500"/><circle cx="1540" cy="1147" r="5.500"/><circle cx="1540" cy="1220" r="5.500"/><circle cx="1096" cy="1156" r="5.500"/><circle cx="1119" cy="1156" r="5.500"/><circle cx="1142" cy="1156" r="5.500"/><circle cx="1165" cy="1156" r="5.500"/><circle cx="1130" cy="1209" r="5.500"/></g>
      </svg>
      <div class="label n-pieces"><div class="type">Object Merge</div><div class="name">pieces1</div><a href="#" class="ref alone">/obj/fracture/PIECES</a></div>
      <div class="label n-anim"><div class="type">Object Merge</div><div class="name">anim_pts1</div><div class="badges"><svg class="bd"><use href="#clock"/></svg></div><a href="#" class="ref">/obj/fracture/ANIM_PTS</a></div>
      <div class="label n-rest"><div class="type">Object Merge</div><div class="name">rest_pts1</div><a href="#" class="ref alone">/obj/fracture/STATIC_PTS</a></div>
      <div class="label n-pyro"><div class="name">pyrosource1</div><div class="badges"><svg class="bd"><use href="#lock"/></svg></div></div>
      <div class="label n-set"><div class="type">Attribute Wrangle</div><div class="name">set_density</div><div class="badges"><svg class="bd"><use href="#clock"/></svg><svg class="bd"><use href="#lock"/></svg></div></div>
      <div class="label n-xform"><div class="name">transformpieces2</div><div class="badges"><svg class="bd"><use href="#clock"/></svg><svg class="bd"><use href="#lock"/></svg></div></div>
      <div class="label n-null"><div class="type">Null</div><div class="name">OUT_PIECES1</div><div class="badges"><svg class="bd"><use href="#clock"/></svg></div></div>
      <div class="label n-vop"><div class="name">attribvop1</div><div class="badges"><svg width="18" height="18" viewBox="0 0 18 18"><path d="M4 7h10l4 10H0z" fill="#3d6a20" stroke="#8c9c84"/><path d="m1 16 4-7 4 5 4-5 4 7z" fill="#1c3010"/><path d="M9 1v10M5 7l4 4 4-4" fill="none" stroke="#d4dccc" stroke-width="1.600"/></svg></div></div>
    </div>
  </section>

  <div class="divider"><span class="up"></span><svg width="8" height="96" viewBox="0 0 8 96"><path d="M6 0v8L1 4zM2 88v8l5-4z" fill="#858585"/><path d="M2.500 32v30M6.500 32v30" stroke="#7a7a7a" stroke-dasharray="1 1.500"/></svg><span class="down"></span></div>

  <section class="pane params">
    <nav class="tabs"><a href="#" class="tab edge">/obj/fracture/set_density</a></nav>
    <div class="bar pathbar"><button class="nav first" aria-label="Back"><svg><use href="#back"/></svg></button></div>
    <div class="bar title"><svg width="30" height="30"><use href="#hat"/></svg></div>
    <div class="group"><button>Code</button></div>
  </section>
</div>
<script src="view.js"></script>
</body>
</html>
```
FILE: styles.css
```css
* { box-sizing: border-box; }
html, body { height: 100%; }
body { margin: 0; background: #2f2f2f; color: #c8c8c8; font-family: "Noto Sans CJK SC", "Noto Sans", sans-serif; font-size: 16px; overflow: hidden; }
button { margin: 0; padding: 0; border: 0; background: none; color: inherit; font: inherit; }
a { color: inherit; text-decoration: none; }
svg { display: block; overflow: visible; }
i { font-style: normal; }
.defs { position: absolute; width: 0; height: 0; }
.grow { flex: 1; }

.app { display: grid; grid-template-columns: minmax(0, 977fr) 9px minmax(0, 1127fr) 10px 24px; height: 100vh; }
.pane { display: flex; flex-direction: column; min-width: 0; min-height: 0; }
.scene, .network { border-right: 1px solid #000; }
.divider { display: flex; flex-direction: column; align-items: center; background: #484848; border-right: 1px solid #3c3c3c; }
.up { flex: 2; }
.down { flex: 1; }

.bar { display: flex; align-items: center; flex: none; }
.pathbar { height: 52px; background: linear-gradient(#4a4a4a, #3a3a3a); border-bottom: 1px solid #000; padding-right: 6px; }
.combo { flex: 1; display: flex; align-items: center; height: 36px; margin-right: 13px; border: 1px solid #000; background: linear-gradient(#404040, #383838); box-shadow: inset 0 1px #5c5c5c; min-width: 0; }
.scene .combo { border-left: 0; }
.path { flex: 1; height: 34px; border: 0; background: none; color: #ddd; font: inherit; min-width: 0; }
.drop { width: 18px; height: 34px; display: flex; align-items: center; justify-content: center; background: #2e2e2e; }
.ic { width: 28px; height: 28px; flex: none; }
.ic svg { width: 28px; height: 28px; }
.ic + .ic { margin-left: 8px; }
.ic + .ic.wide { margin-left: 23px; }
.ic + .ic.g { margin-left: 34px; }

.stub { height: 5px; flex: none; background: #2d2d2d; border-bottom: 1px solid #232323; display: flex; }
.stub i { width: 84px; border-right: 3px solid #1c1c1c; }
.tools { height: 48px; background: #2e2e2e; border-top: 2px solid #5a5a5a; padding-right: 6px; }
.tool { height: 36px; flex: none; display: flex; align-items: center; justify-content: center; }
.tool.on, .b.on { background: linear-gradient(#5a6f87, #7890ad); border: 1px solid #4b4f54; box-shadow: inset 1px 1px #34465c; }
.sel { width: 23px; }
.vsep { width: 1px; height: 36px; background: #505050; margin-right: 7px; }
.vsep.s2, .vsep.s3 { margin-left: 8px; margin-right: 9px; }
.vsep.s3 { margin-left: 9px; }
.drone { margin-right: 6px; }
.bub { margin-right: 8px; }
.qm { font: bold 19px "Noto Sans", sans-serif; fill: #f0f0ee; text-anchor: middle; }
.inf { font: italic bold 21px "Liberation Serif", serif; fill: #f0f0ee; text-anchor: middle; }
.num { font-weight: bold; font-size: 16px; fill: #e0e0dc; text-anchor: middle; }

.work { flex: 1; display: flex; min-height: 0; }
.viewport { flex: 1; position: relative; background: #000; min-width: 0; display: flex; flex-direction: column; justify-content: space-between; align-items: flex-end; overflow: hidden; }
.view { position: absolute; inset: 0; width: 100%; height: 100%; }
.pills { position: relative; display: flex; gap: 7px; padding: 8px 7px; }
.pill { height: 28px; border: 1px solid #9a9a9a; border-radius: 14px; background: #141414; padding: 0 9px 0 11px; display: flex; align-items: center; gap: 4px; line-height: 24px; color: #b4b4b4; }
.pill svg { margin-top: 4px; }
.stats { position: relative; display: flex; flex-direction: column; align-items: flex-end; width: 158px; padding: 3px 7px 0; height: 83px; background: rgba(0, 0, 0, .6); color: #9c9c9c; }
.stats strong { font-size: 32px; line-height: 43px; white-space: nowrap; }
.stats span { line-height: 30px; }

.strip { width: 40px; flex: none; background: #3a3a3a; display: flex; flex-direction: column; align-items: center; gap: 2px; padding-top: 2px; overflow: hidden; }
.head { width: 39px; height: 14px; flex: none; background: linear-gradient(#4c4c4c, #383838); border: 1px solid #686868; border-right: 0; border-bottom-color: #111; display: flex; justify-content: flex-end; align-items: center; padding-right: 2px; align-self: flex-end; }
.b { width: 36px; height: 36px; flex: none; display: flex; align-items: center; justify-content: center; }
.b svg { width: 36px; height: 36px; flex: none; }
.b.on:last-child { margin-bottom: -3px; }
.tri { fill: #8a8a8a; }
.on .tri { fill: #2b3138; }
.rule { width: 36px; border-top: 1px solid #565656; flex: none; }
.tight { height: 5px; margin-top: -2px; }
.loose { height: 9px; margin-top: 9px; }
.foot { height: 3px; }

.tabs { height: 14px; flex: none; display: flex; align-items: flex-end; overflow: hidden; background: #2d2d2d; border-bottom: 1px solid #222; }
.tab { height: 30px; display: flex; align-items: flex-end; justify-content: space-between; padding: 0 9px 4px 11px; font-size: 14px; line-height: 20px; border-right: 2px solid #1c1c1c; white-space: nowrap; }
.t1 { width: 136px; padding-left: 9px; }
.t2 { width: 119px; padding-left: 13px; }
.t3 { width: 156px; }
.t4 { width: 144px; padding-left: 10px; }
.cur { background: #4a4a4a; font-style: italic; }
.cur b { font-style: normal; }
.plus { align-self: flex-start; margin-left: 10px; }
.max { align-self: flex-start; }
.nav { width: 30px; height: 36px; margin: 0 0 0 5px; flex: none; }
.nav svg { width: 30px; height: 36px; }
.crumbs { margin-left: 12px; line-height: 24px; color: #dcdcdc; }
.crumbs a { display: flex; align-items: center; gap: 5px; margin-left: 5px; }
.crumbs span { padding-bottom: 2px; }
.chev { margin-left: 8px; }
.menubar { height: 41px; background: linear-gradient(#3c3c3c, #303030); border-bottom: 1px solid #000; padding-right: 4px; }
.fold { width: 15px; height: 40px; padding-top: 3px; background: linear-gradient(90deg, #4c4c4c, #3a3a3a); border: 1px solid #686868; border-right: 2px solid #000; display: flex; justify-content: center; margin-right: 1px; }
.m { font-size: 17px; line-height: 26px; margin-left: 24px; color: #cacaca; }
.fold + .m { margin-left: 12px; }
.m.n2 { margin-left: 18px; }
.icons { display: flex; }

.canvas { flex: 1; position: relative; overflow: hidden; background: #2f2f2f; }
.context { text-align: right; padding: 14px 16px 0; font-size: 34px; line-height: 52px; font-weight: bold; color: #505050; }
.graph { position: absolute; left: 0; top: 0; }
.label { position: absolute; font-size: 22px; line-height: 26px; white-space: nowrap; color: #cecece; }
.type { font-size: 21px; color: #606060; }
.ref { display: block; font-size: 21px; color: #6ea3e2; }
.alone { margin-top: 12px; }
.badges { display: flex; align-items: center; gap: 10px; height: 26px; padding: 2px 0 0 5px; }
.bd { width: 15px; height: 17px; }
.n-pieces { left: 295px; top: 423px; }
.n-anim { left: 624px; top: 423px; }
.n-rest { left: 987px; top: 423px; }
.n-pyro { left: 292px; top: 586px; }
.n-set { left: 621px; top: 578px; }
.n-xform { left: 621px; top: 831px; }
.n-null { left: 605px; top: 1035px; }
.n-vop { left: 216px; top: 1061px; }

.params { overflow: hidden; background: #383838; }
.edge { padding-left: 8px; font-style: italic; border: 0; }
.nav.first { margin-left: 3px; }
.title { height: 40px; border-bottom: 1px solid #000; margin-left: 3px; padding-left: 3px; }
.group { margin: 6px 0 0 3px; height: 34px; background: #4a4a4a; border: 1px solid #222; border-bottom-color: #5a5a5a; padding-left: 10px; line-height: 32px; font-weight: bold; overflow: hidden; width: 90px; }
```
FILE: view.js
```js
(function () {
  var canvas = document.getElementById('view');
  var W = canvas.clientWidth, H = canvas.clientHeight, top = 105;
  canvas.width = W; canvas.height = H;
  var g = canvas.getContext('2d');
  g.fillStyle = '#000';
  g.fillRect(0, 0, W, H);
  g.translate(0, -top);
  var bottom = H + top, horizon = 780;

  // ground plane projection: w = a*u + b*v + c, x = (p*u + q*v + r) / w, y = horizon + 1 / w
  var a = -0.0000922, b = 0.0001912, c = 0.001883, p = 0.3727, q = 0.2052, r = 1.2498;
  function column(u, y) {
    var w = 1 / (y - horizon), v = (w - a * u - c) / b;
    return (p * u + q * v + r) / w;
  }
  function row(v, x) {
    var u = (x * (b * v + c) - q * v - r) / (p - a * x);
    return horizon + 1 / (a * u + b * v + c);
  }
  function lines(step, color, width) {
    var i, v, u, y0, y1, far = 850;
    g.strokeStyle = color; g.lineWidth = width;
    g.beginPath();
    for (i = -15; i < 400; i += step) {
      v = i / 5; y0 = row(v, 0); y1 = row(v, W);
      g.moveTo(0, y0); g.lineTo(W, y1);
    }
    for (i = -400; i < 60; i += step) {
      u = i / 5;
      g.moveTo(column(u, far), far); g.lineTo(column(u, bottom), bottom);
    }
    g.stroke();
  }
  lines(1, '#20272f', 1.3);
  lines(5, '#262f39', 2);

  // distance fog
  var fog = g.createLinearGradient(0, 830, 0, 1010);
  fog.addColorStop(0, 'rgba(0,0,0,1)');
  fog.addColorStop(0.25, 'rgba(9,12,15,1)');
  fog.addColorStop(0.47, 'rgba(18,23,28,1)');
  fog.addColorStop(0.6, 'rgba(22,27,34,.75)');
  fog.addColorStop(0.8, 'rgba(22,27,34,.35)');
  fog.addColorStop(1, 'rgba(22,27,34,0)');
  g.fillStyle = fog;
  g.fillRect(0, 780, W, 230);

  // axis labels on the ground
  g.fillStyle = '#3a2824';
  [[675, 1308], [711, 1261], [743, 1220], [767, 1187], [791, 1156], [809, 1130]].forEach(function (m, k) {
    var s = 16 - k * 2;
    for (var j = 0; j < 8; j++) g.fillRect(m[0] - s / 2 + (j * 5) % s, m[1] - 3 + (j * 3) % 7, 3, 1);
  });

  // point cloud
  var seed = 12345;
  function rnd() { seed = (seed * 1103515245 + 12345) % 2147483648; return seed / 2147483648; }
  function dot(x, y, l) {
    g.fillStyle = 'rgb(' + l + ',' + l + ',' + l + ')';
    g.fillRect(Math.round(x), Math.round(y), rnd() > 0.5 ? 2 : 1, 1);
    if (rnd() > 0.6) g.fillRect(Math.round(x), Math.round(y) + 1, 1, 1);
  }
  for (var n = 0; n < 1100; n++) {
    var y = 642 + 178 * (rnd() + rnd() * 0.6) / 1.6;
    if (y > 755 && rnd() > 0.6) y -= 65;
    var left = y < 690 ? 105 + (690 - y) * 0.5 : 105 + (y - 690) * 0.52;
    var x = left + (388 - (y - 645) * 0.1 - left) * Math.pow(rnd(), 1.4);
    var k = y < 720 ? (y - 635) / 85 : y > 775 ? (845 - y) / 70 : 1;
    dot(x, y, Math.round(12 + 185 * k * k * (0.45 + 0.55 * rnd())));
  }
  [[92, 697], [104, 720], [404, 684], [420, 684], [410, 708], [407, 735], [412, 752], [404, 765], [433, 762], [419, 772], [393, 786], [395, 795], [454, 806]].forEach(function (m) { dot(m[0], m[1], 130); });
  g.fillStyle = '#000';
  [[120, 859], [136, 864], [144, 864], [148, 868], [156, 866], [88, 875], [98, 873], [127, 880], [173, 879], [178, 878], [149, 885], [98, 887], [104, 888], [119, 892], [88, 900], [125, 899], [138, 910], [57, 918], [223, 894], [236, 894], [296, 906], [375, 883], [435, 891], [227, 853], [242, 851], [273, 864], [305, 858], [350, 858], [370, 859], [185, 949]].forEach(function (m) { g.fillRect(m[0], m[1], 2, 2); });
})();
```
